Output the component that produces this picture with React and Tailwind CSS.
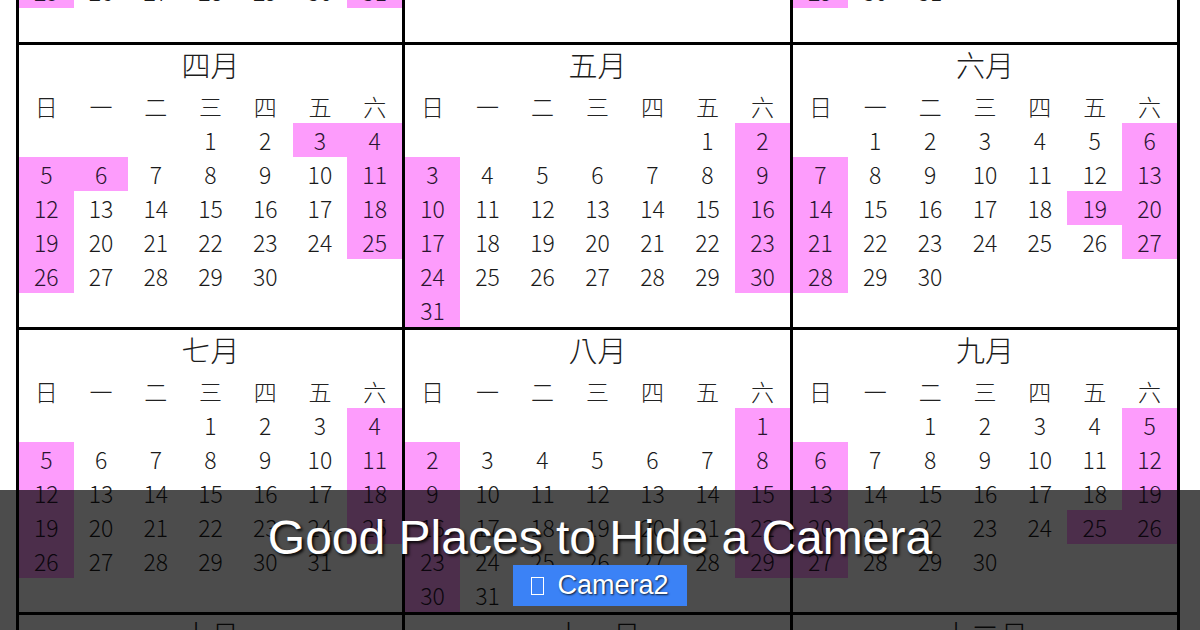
const WEEK = ['日', '一', '二', '三', '四', '五', '六']
const MONTHS = ['一月', '二月', '三月', '四月', '五月', '六月', '七月', '八月', '九月', '十月', '十一月', '十二月']

// weekday holidays, weekends are always marked
const HOLIDAYS = {
    0: [1, 2],
    1: [18, 19, 20, 23, 27],
    3: [3, 6],
    5: [19],
    8: [25],
    9: [9],
}

const YEAR = 2015

function MonthBlock({ m }) {
    const first = new Date(YEAR, m, 1).getDay()
    const days = new Date(YEAR, m + 1, 0).getDate()

    const cells = []
    for (let i = 0; i < first; i++) cells.push(null)
    for (let d = 1; d <= days; d++) cells.push(d)
    while (cells.length < 42) cells.push(null)

    return (
        <div className="h-[285px] border-r-[3px] border-b-[3px] border-black flex flex-col">
            <div className="h-[44px] pb-[5px] flex items-center justify-center text-[29px] text-[#1c1c1c]">
                {MONTHS[m]}
            </div>
            <div className="h-[34px] pb-[3px] grid grid-cols-7">
                {WEEK.map(w => (
                    <div key={w} className="flex items-center justify-center text-[23px] text-[#222]">{w}</div>
                ))}
            </div>
            <div className="grid grid-cols-7 auto-rows-[34px]">
                {cells.map((d, i) => {
                    const dow = i % 7
                    const pink = d && (dow === 0 || dow === 6 || (HOLIDAYS[m] || []).includes(d))
                    return (
                        <div
                            key={i}
                            className={pink
                                ? "flex items-center justify-center text-[23px] bg-[#fd9cfc] text-[#2b1430]"
                                : "flex items-center justify-center text-[23px] text-[#1a1a1a]"}
                        >
                            {d}
                        </div>
                    )
                })}
            </div>
        </div>
    )
}

export default function App() {
    return (
        <div className="relative w-[1200px] h-[630px] overflow-hidden bg-white font-light font-['Noto_Sans_CJK_TC','Noto_Sans',sans-serif]">
            <div className="ml-[16px] -mt-[243px] w-[1164px] grid grid-cols-[386px_388px_387px] border-l-[3px] border-t-[3px] border-black">
                {MONTHS.map((_, m) => (
                    <MonthBlock key={m} m={m} />
                ))}
            </div>

            <div className="absolute inset-x-0 bottom-0 h-[140px] bg-black/70 flex flex-col items-center pt-[24px]">
                <h1 className="text-[48px] leading-none font-normal text-white font-['Liberation_Sans',Arial,sans-serif] [text-shadow:2px_2px_3px_rgba(0,0,0,0.9)]">
                    Good Places to Hide a Camera
                </h1>
                <div className="mt-[3px] h-[41px] px-[18px] flex items-center gap-[13px] bg-[#3b82f6] text-white font-normal font-['Liberation_Sans',Arial,sans-serif] text-[27px] [text-shadow:1px_1px_2px_rgba(0,0,0,0.8)]">
                    <span className="inline-block w-[13px] h-[18px] border-[1.5px] border-white"></span>
                    <span>Camera2</span>
                </div>
            </div>
        </div>
    )
}
